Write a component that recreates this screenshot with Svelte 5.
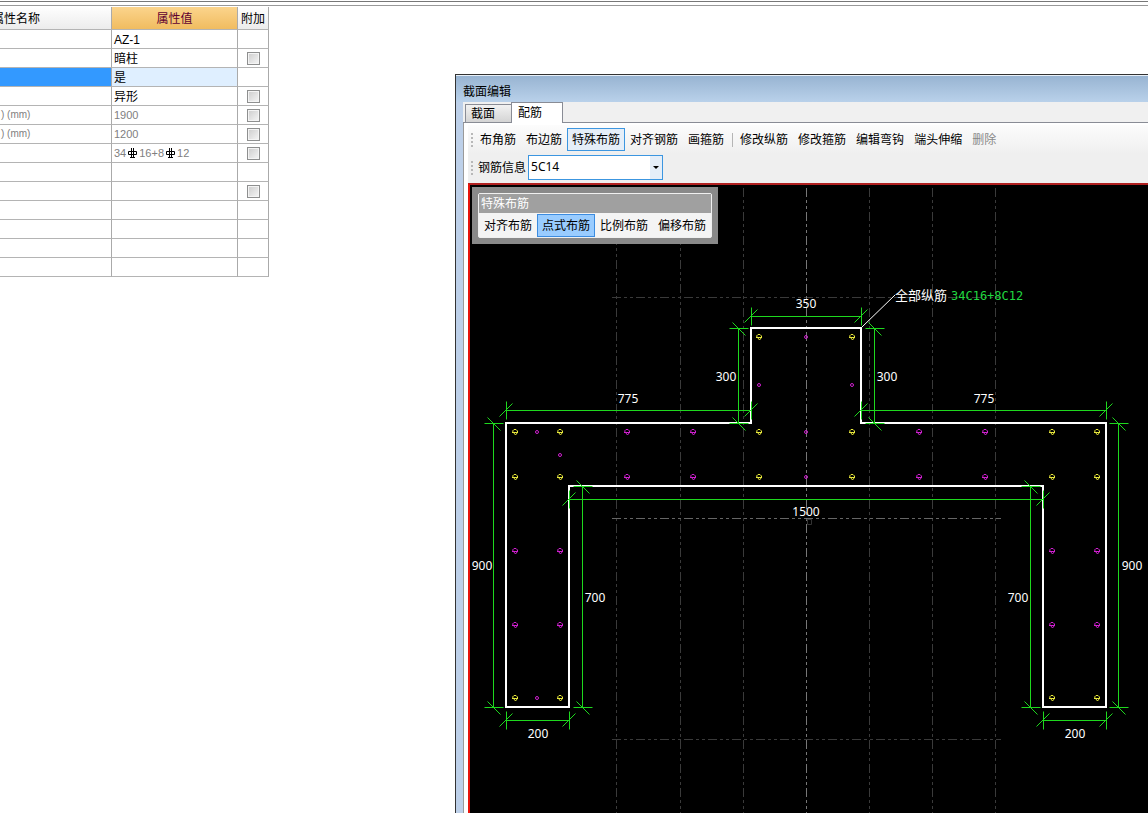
<script>
    let rows = [
        { name: "", value: "AZ-1" },
        { name: "", value: "暗柱", check: true },
        { name: "", value: "是", selected: true },
        { name: "", value: "异形", check: true },
        { name: ") (mm)", value: "1900", check: true, grey: true },
        { name: ") (mm)", value: "1200", check: true, grey: true },
        { name: "", bars: ["34", "16+8", "12"], check: true, grey: true },
        { name: "" },
        { name: "", check: true },
        { name: "" },
        { name: "" },
        { name: "" },
        { name: "" }
    ]

    let tools = ["布角筋", "布边筋", "特殊布筋", "对齐钢筋", "画箍筋"]
    let editTools = ["修改纵筋", "修改箍筋", "编辑弯钩", "端头伸缩"]
    let modes = ["对齐布筋", "点式布筋", "比例布筋", "偏移布筋"]

    let tab = "配筋"
    let tool = "特殊布筋"
    let mode = "点式布筋"
    let info = "5C14"

    // grid axes
    let axesX = [616.5, 680.5, 743.5, 869.5, 932.5, 995.5]

    // dimension lines: start, end, position of the line
    let dimsH = [
        { a: 751.5, b: 861.5, y: 316.5, text: "350", tx: 806, ty: 308 },
        { a: 506.5, b: 751.5, y: 410.5, text: "775", tx: 628, ty: 403 },
        { a: 861.5, b: 1106.5, y: 410.5, text: "775", tx: 984, ty: 403 },
        { a: 569.5, b: 1043.5, y: 499.5, text: "1500", tx: 806, ty: 516 },
        { a: 506.5, b: 569.5, y: 720.5, text: "200", tx: 538, ty: 738 },
        { a: 1043.5, b: 1106.5, y: 720.5, text: "200", tx: 1075, ty: 738 }
    ]
    let dimsV = [
        { a: 328.5, b: 423.5, x: 738.5, text: "300", tx: 726, ty: 381 },
        { a: 328.5, b: 423.5, x: 874.5, text: "300", tx: 887, ty: 381 },
        { a: 423.5, b: 707.5, x: 493.5, text: "900", tx: 482, ty: 570 },
        { a: 423.5, b: 707.5, x: 1118.5, text: "900", tx: 1132, ty: 570 },
        { a: 486.5, b: 707.5, x: 582.5, text: "700", tx: 595, ty: 602 },
        { a: 486.5, b: 707.5, x: 1030.5, text: "700", tx: 1018, ty: 602 }
    ]

    let corner = [
        [759, 337], [852, 337], [759, 432], [852, 432], [759, 477], [852, 477],
        [515, 432], [560, 432], [515, 477], [560, 477], [515, 698], [560, 698],
        [1052, 432], [1097, 432], [1052, 477], [1097, 477], [1052, 698], [1097, 698]
    ]
    let side = [
        [627, 432], [693, 432], [627, 477], [693, 477],
        [919, 432], [985, 432], [919, 477], [985, 477],
        [515, 551], [560, 551], [515, 625], [560, 625],
        [1052, 551], [1097, 551], [1052, 625], [1097, 625]
    ]
    let small = [
        [806, 337], [759, 385], [852, 385], [537, 432],
        [560, 455], [806, 432], [806, 477], [537, 698]
    ]
</script>

{#snippet rebar()}
    <svg class="rebar" viewBox="0 0 9 10" width="9" height="10" aria-hidden="true">
        <path d="M0.5 3.5V6.5H8.5V3.5H0.5M3.5 0V9M5.5 0V9M2 9.5H7" />
    </svg>
{/snippet}

<div class="page">
    <div class="topline"></div>
    <div class="main">
        <div class="props">
            <table>
                <thead>
                    <tr>
                        <th class="name">属性名称</th>
                        <th class="value">属性值</th>
                        <th class="extra">附加</th>
                    </tr>
                </thead>
                <tbody>
                    {#each rows as row}
                        <tr class:selected={row.selected} class:grey={row.grey}>
                            <td class="name">{row.name}</td>
                            <td class="value">
                                {#if row.bars}
                                    <span class="bars">{row.bars[0]}{@render rebar()}{row.bars[1]}{@render rebar()}{row.bars[2]}</span>
                                {:else}
                                    {row.value ?? ""}
                                {/if}
                            </td>
                            <td class="extra">
                                {#if row.check}<input type="checkbox" aria-label="附加">{/if}
                            </td>
                        </tr>
                    {/each}
                </tbody>
            </table>
        </div>

        <div class="window">
            <div class="title">截面编辑</div>
            <div class="tabs">
                {#each ["截面", "配筋"] as t}
                    <button class="tab" class:active={tab == t} on:click={() => tab = t}>{t}</button>
                {/each}
            </div>
            <div class="panel">
                <div class="toolbars">
                    <div class="toolbar">
                        <span class="grip"></span>
                        {#each tools as t}
                            <button class="tool" class:on={tool == t} on:click={() => tool = t}>{t}</button>
                        {/each}
                        <span class="sep"></span>
                        {#each editTools as t}
                            <button class="tool" class:on={tool == t} on:click={() => tool = t}>{t}</button>
                        {/each}
                        <button class="tool" disabled>删除</button>
                    </div>
                    <div class="toolbar">
                        <span class="grip"></span>
                        <label for="info">钢筋信息</label>
                        <div class="combo">
                            <select id="info" bind:value={info}>
                                <option>5C14</option>
                            </select>
                            <span class="arrow"></span>
                        </div>
                    </div>
                </div>

                <div class="canvas">
                    <svg class="drawing" width="100%" height="100%">
                        <g transform="translate(-470 -185)">
                            <g class="axes">
                                {#each axesX as x}
                                    <path d="M{x} 188V1200" />
                                {/each}
                                <path d="M612 297.5H1001M612 739.5H1001" />
                                <path class="mid" d="M612 518.5H1001" />
                                <path class="center" d="M806.5 188V1200" />
                            </g>
                            <path class="origin" d="M806.5 519.5H811.5V524.5H807.5V519.5" />

                            <path class="outline" d="M751 328H861V423H1106V707H1043V486H569V707H506V423H751Z" />

                            <g class="dims">
                                {#each dimsH as d}
                                    <path d="M{d.a} {d.y}H{d.b}M{d.a} {d.y - 9}v18M{d.b} {d.y - 9}v18" />
                                    <path d="M{d.a - 7} {d.y + 6}l13 -13M{d.b - 7} {d.y + 6}l13 -13" />
                                {/each}
                                {#each dimsV as d}
                                    <path d="M{d.x} {d.a}V{d.b}M{d.x - 9} {d.a}h19M{d.x - 9} {d.b}h19" />
                                    <path d="M{d.x - 6} {d.a - 6}l13 13M{d.x - 6} {d.b - 6}l13 13" />
                                {/each}
                            </g>

                            <g class="numbers">
                                {#each [...dimsH, ...dimsV] as d}
                                    <text x={d.tx} y={d.ty}>{d.text}</text>
                                {/each}
                            </g>

                            <g class="corner">
                                {#each corner as [x, y]}
                                    <path d="M{x - 2.5} {y - 1}l1.5 -1.5h2l1.5 1.5v1.5l-2 2.5l-2 -2.5z" />
                                    <path d="M{x - 3} {y + 0.5}h6" />
                                {/each}
                            </g>
                            <g class="side">
                                {#each side as [x, y]}
                                    <path d="M{x - 2.5} {y - 1}l1.5 -1.5h2l1.5 1.5v1.5l-2 2.5l-2 -2.5z" />
                                    <path d="M{x - 3} {y + 0.5}h6" />
                                {/each}
                                {#each small as [x, y]}
                                    <circle cx={x} cy={y} r="1.5" />
                                {/each}
                            </g>

                            <path class="leader" d="M862 327L895 295" />
                            <text class="note" x="895" y="300">全部纵筋</text>
                            <text class="spec" x="951" y="300">34C16+8C12</text>
                        </g>
                    </svg>

                    <div class="palette">
                        <div class="inner">
                            <div class="caption">特殊布筋</div>
                            <div class="modes">
                                {#each modes as m}
                                    <button class="tool" class:picked={mode == m} on:click={() => mode = m}>{m}</button>
                                {/each}
                            </div>
                        </div>
                    </div>
                </div>
            </div>
        </div>
    </div>
</div>

<style>
    :global(body) {
        margin: 0;
        background: #fff;
    }

    .page {
        display: flex;
        flex-direction: column;
        height: 100vh;
        overflow: hidden;
        font-family: "Noto Sans", "Noto Sans CJK SC", sans-serif;
        font-size: 12px;
        line-height: 16px;
        color: #000;
    }

    .topline {
        box-sizing: border-box;
        flex: none;
        height: 5px;
        margin: 1px 0;
        border-top: 1px solid #777;
        border-bottom: 1px solid #999;
    }

    .main {
        display: flex;
        flex: 1;
        min-height: 0;
    }

    /* property table */

    .props {
        flex: 0 0 455px;
    }

    table {
        width: 348px;
        margin-left: -79px;
        table-layout: fixed;
        border-collapse: separate;
        border-spacing: 0;
        font-family: "Liberation Sans", "Noto Sans CJK SC", sans-serif;
    }

    th, td {
        box-sizing: border-box;
        padding: 0;
        border-right: 1px solid #aaa;
        border-bottom: 1px solid #b4b4b4;
        white-space: nowrap;
    }

    th {
        height: 23px;
        padding-top: 2px;
        font-weight: normal;
        background: linear-gradient(#fefefe, #ececec);
    }

    td {
        height: 19px;
        padding-top: 2px;
        line-height: 16px;
    }

    .name {
        width: 191px;
    }

    td.name {
        padding-left: 80px;
    }

    .value {
        width: 126px;
    }

    th.value {
        color: #600030;
        background: linear-gradient(#fbd48c, #f0bc60);
    }

    td.value {
        padding-left: 2px;
    }

    .extra {
        width: 31px;
        text-align: center;
    }

    td.extra {
        padding-top: 0;
    }

    .grey {
        color: #808080;
    }

    .grey td {
        padding-top: 0;
        font-size: 11px;
    }

    .grey td.name {
        font-size: 10px;
    }

    .selected .name {
        background: #3399ff;
    }

    .selected .value {
        background: #dfefff;
    }

    .bars {
        display: flex;
        align-items: center;
    }

    .rebar {
        margin: 0 2px;
        fill: none;
        stroke: #000;
    }

    input[type="checkbox"] {
        appearance: none;
        display: block;
        box-sizing: border-box;
        width: 13px;
        height: 13px;
        margin: 0 auto;
        border: 1px solid #8e8f8f;
        background: linear-gradient(135deg, #ccc, #f6f6f6);
        box-shadow: inset 0 0 0 1px #f4f4f4;
    }

    /* section editor window */

    .window {
        display: flex;
        flex-direction: column;
        flex: 1;
        min-width: 0;
        margin-top: 67px;
        border-top: 1px solid #333;
        border-left: 1px solid #333;
        background: #bdd0e9;
    }

    .title {
        flex: none;
        height: 21px;
        padding: 5px 0 0 7px;
        line-height: 22px;
        border-top: 1px solid #e8f0f8;
        background: linear-gradient(#98b4d2, #b9d1ea);
    }

    .tabs {
        display: flex;
        align-items: flex-end;
        flex: none;
        box-sizing: border-box;
        height: 21px;
        margin-left: 7px;
        padding-left: 2px;
        border-bottom: 1px solid #898c95;
        background: #f0f0f0;
    }

    button {
        box-sizing: border-box;
        margin: 0;
        font: inherit;
        color: inherit;
        white-space: nowrap;
    }

    .tab {
        width: 46px;
        height: 18px;
        padding: 0 5px;
        line-height: 16px;
        text-align: left;
        border: 1px solid #898c95;
        border-bottom: 0;
        border-right: 0;
        background: linear-gradient(#f2f2f2, #d4d4d4);
    }

    .tab.active {
        width: 52px;
        height: 21px;
        margin-bottom: -1px;
        padding-left: 6px;
        border-right: 1px solid #898c95;
        background: #fff;
    }

    .panel {
        display: flex;
        flex-direction: column;
        flex: 1;
        min-height: 0;
        margin-left: 7px;
        padding: 2px 0 0 4px;
        border-left: 1px solid #9a9a9a;
        background: #fff;
    }

    .toolbars {
        display: flex;
        flex-direction: column;
        flex: none;
        gap: 3px;
        padding: 2px 0 3px 3px;
        background: linear-gradient(#fcfcfc, #efefef 50%);
    }

    .toolbar {
        display: flex;
        align-items: center;
        height: 25px;
    }

    .grip {
        width: 2px;
        height: 14px;
        margin-right: 2px;
        background: repeating-linear-gradient(#b8b8b8 0 2px, transparent 2px 4px);
    }

    .tool {
        height: 23px;
        padding: 0 4px;
        border: 1px solid transparent;
        background: none;
    }

    .tool.on {
        border-color: #3c96e0;
        background: #e5eef8;
    }

    .tool:disabled {
        color: #888;
    }

    .sep {
        width: 1px;
        height: 14px;
        margin: 0 2px 0 3px;
        background: #b5b5b5;
    }

    label {
        padding: 0 2px 0 3px;
    }

    .combo {
        display: flex;
        position: relative;
    }

    select {
        appearance: none;
        box-sizing: border-box;
        width: 135px;
        height: 25px;
        margin: 0;
        padding: 0 14px 2px 2px;
        font: inherit;
        color: #000;
        border: 1px solid #3c96e0;
        border-radius: 0;
        background: linear-gradient(#e5eef8, #e5eef8) right / 12px 100% no-repeat #fff;
    }

    .arrow {
        position: absolute;
        right: 4px;
        top: 11px;
        border: 3px solid transparent;
        border-top-color: #000;
        border-bottom: 0;
        pointer-events: none;
    }

    .canvas {
        position: relative;
        flex: 1;
        min-height: 0;
        overflow: hidden;
        border-top: 2px solid #b02020;
        border-left: 2px solid #e8140c;
        background: #000;
    }

    .drawing {
        display: block;
        fill: none;
        font-family: "DejaVu Sans Mono", "Noto Sans CJK SC", monospace;
        font-size: 12px;
    }

    .axes {
        stroke: #3a3a3a;
        stroke-dasharray: 9 3 3 3 3 3;
    }

    .axes .mid {
        stroke: #666;
    }

    .axes .center {
        stroke: #777;
    }

    .origin {
        stroke: #333;
    }

    .outline {
        stroke: #fff;
        stroke-width: 2;
    }

    .dims {
        stroke: #1ed81e;
    }

    .numbers {
        fill: #fff;
        font-family: "Noto Sans", sans-serif;
        text-anchor: middle;
    }

    .corner {
        stroke: #e8e83c;
    }

    .side {
        stroke: #d020d0;
    }

    .leader {
        stroke: #fff;
    }

    .note {
        fill: #fff;
        font-family: "Noto Sans CJK SC", sans-serif;
        font-size: 13px;
    }

    .spec {
        fill: #20d840;
    }

    .palette {
        position: absolute;
        left: 2px;
        top: 2px;
        padding: 6px;
        background: #898989;
    }

    .inner {
        border: 1px solid #f0f0f0;
        border-radius: 2px;
        background: #f4f4f4;
    }

    .caption {
        height: 19px;
        padding-left: 2px;
        line-height: 19px;
        color: #fff;
        background: #a0a0a0;
    }

    .modes {
        display: flex;
        padding-top: 1px;
    }

    .tool.picked {
        border-color: #3c8ce0;
        background: #99ccff;
    }
</style>
